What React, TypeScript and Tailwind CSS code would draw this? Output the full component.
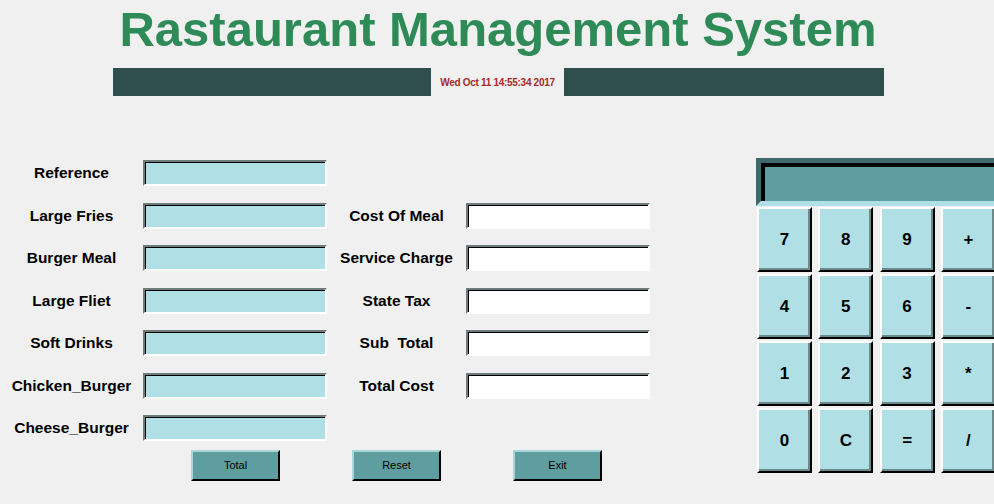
import React from 'react';

const leftItems = ['Reference', 'Large Fries', 'Burger Meal', 'Large Fliet', 'Soft Drinks', 'Chicken_Burger', 'Cheese_Burger'];
const rightItems = ['Cost Of Meal', 'Service Charge', 'State Tax', 'Sub  Total', 'Total Cost'];
const keys = ['7', '8', '9', '+', '4', '5', '6', '-', '1', '2', '3', '*', '0', 'C', '=', '/'];

function Field({ white }: { white?: boolean }) {
  return (
    <div
      className={
        'h-[26px] w-[184px] border-2 border-t-[#6e7c7c] border-l-[#6e7c7c] border-b-white border-r-white shadow-[inset_1px_1px_0_0_#000] ' +
        (white ? 'bg-white' : 'bg-[#b0e0e6]')
      }
    />
  );
}

function ActionButton({ label }: { label: string }) {
  return (
    <button className="h-[31px] w-[89px] border-2 border-t-[#a9d6d8] border-l-[#a9d6d8] border-b-black border-r-black bg-[#5f9ea0] text-[11px] text-black">
      {label}
    </button>
  );
}

export default function App() {
  return (
    <div className="relative h-[504px] w-[994px] overflow-hidden bg-[#f0f0f0] font-['Liberation_Sans',Arial,sans-serif]">
      <h1 className="pt-[5px] pl-[2px] text-center text-[49px] font-bold leading-[49px] text-[#2e8b57]">
        Rastaurant Management System
      </h1>

      <div className="mt-[14px] flex pl-[113px]">
        <div className="h-[28px] w-[318px] bg-[#2f4f4f]" />
        <div className="flex h-[28px] w-[133px] items-center justify-center text-[10px] font-bold tracking-[-0.3px] text-[#a52a2a]">
          Wed Oct 11 14:55:34 2017
        </div>
        <div className="h-[28px] w-[320px] bg-[#2f4f4f]" />
      </div>

      <div className="mt-[62px] flex">
        <div className="w-[756px] shrink-0 pt-[2px]">
          <div className="flex">
            <div className="flex flex-col gap-[16.5px]">
              {leftItems.map((item) => (
                <div key={item} className="flex">
                  <div className="flex h-[26px] w-[143px] items-center justify-center text-[15.5px] font-bold text-black">
                    {item}
                  </div>
                  <Field />
                </div>
              ))}
            </div>
            <div className="flex flex-col gap-[16.5px] pt-[42.5px]">
              {rightItems.map((item) => (
                <div key={item} className="flex">
                  <div className="flex h-[26px] w-[139px] items-center justify-center whitespace-pre text-[15.5px] font-bold text-black">
                    {item}
                  </div>
                  <Field white />
                </div>
              ))}
            </div>
          </div>
          <div className="mt-[9px] flex gap-[72px] pl-[191px]">
            <ActionButton label="Total" />
            <ActionButton label="Reset" />
            <ActionButton label="Exit" />
          </div>
        </div>

        <div className="w-[250px] shrink-0">
          <div className="h-[48px] w-[250px] border-[5px] border-t-[#3e6a6b] border-l-[#3e6a6b] border-b-[#b0e0e6] border-r-[#b0e0e6] bg-[#5f9ea0] shadow-[inset_4px_4px_0_0_#000]" />
          <div className="ml-px mt-px grid grid-cols-[55px_55px_55px_55px] gap-x-[6.3px] gap-y-[2px]">
            {keys.map((k) => (
              <button
                key={k}
                className="flex h-[65px] items-center justify-center border-2 border-t-white border-l-white border-b-black border-r-black bg-[#b0e0e6] text-[17px] font-bold text-black shadow-[inset_-2px_-2px_0_0_#6b8a8c]"
              >
                {k}
              </button>
            ))}
          </div>
        </div>
      </div>
    </div>
  );
}
